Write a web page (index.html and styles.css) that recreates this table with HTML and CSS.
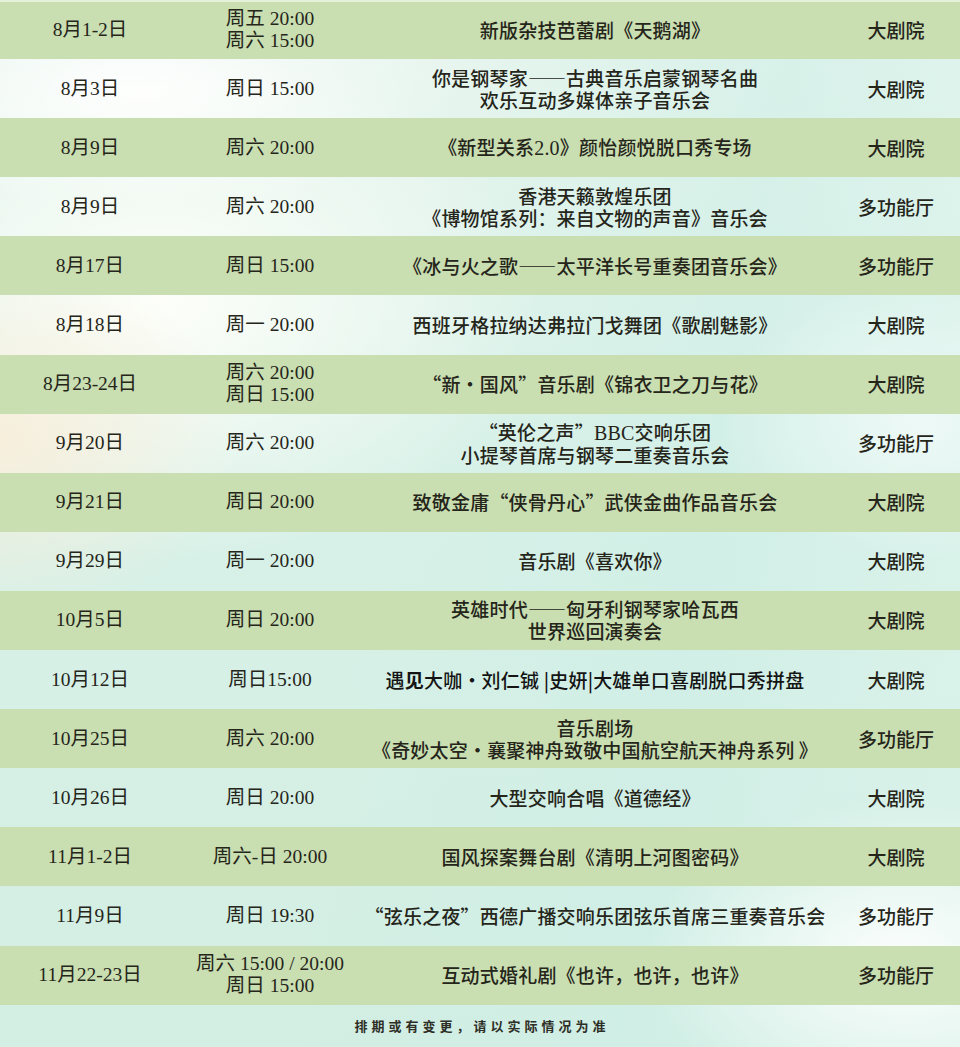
FILE: index.html
```html
<!DOCTYPE html>
<html lang="zh-CN">
<head>
<meta charset="utf-8">
<title>演出排期</title>
<link rel="stylesheet" href="styles.css">
</head>
<body>
<main class="page">
  <div class="schedule">
    <div class="row green">
      <div class="date">8月1-2日</div>
      <div class="time">周五 20:00<br>周六 15:00</div>
      <div class="title">新版杂技芭蕾剧《天鹅湖》</div>
      <div class="venue">大剧院</div>
    </div>
    <div class="row">
      <div class="date">8月3日</div>
      <div class="time">周日 15:00</div>
      <div class="title">你是钢琴家——古典音乐启蒙钢琴名曲<br>欢乐互动多媒体亲子音乐会</div>
      <div class="venue">大剧院</div>
    </div>
    <div class="row green">
      <div class="date">8月9日</div>
      <div class="time">周六 20:00</div>
      <div class="title">《新型关系<span class="lat">2.0</span>》颜怡颜悦脱口秀专场</div>
      <div class="venue">大剧院</div>
    </div>
    <div class="row">
      <div class="date">8月9日</div>
      <div class="time">周六 20:00</div>
      <div class="title">香港天籁敦煌乐团<br>《博物馆系列：来自文物的声音》音乐会</div>
      <div class="venue">多功能厅</div>
    </div>
    <div class="row green">
      <div class="date">8月17日</div>
      <div class="time">周日 15:00</div>
      <div class="title">《冰与火之歌——太平洋长号重奏团音乐会》</div>
      <div class="venue">多功能厅</div>
    </div>
    <div class="row">
      <div class="date">8月18日</div>
      <div class="time">周一 20:00</div>
      <div class="title">西班牙格拉纳达弗拉门戈舞团《歌剧魅影》</div>
      <div class="venue">大剧院</div>
    </div>
    <div class="row green">
      <div class="date">8月23-24日</div>
      <div class="time">周六 20:00<br>周日 15:00</div>
      <div class="title">“新・国风”音乐剧《锦衣卫之刀与花》</div>
      <div class="venue">大剧院</div>
    </div>
    <div class="row">
      <div class="date">9月20日</div>
      <div class="time">周六 20:00</div>
      <div class="title">“英伦之声”<span class="lat">BBC</span>交响乐团<br>小提琴首席与钢琴二重奏音乐会</div>
      <div class="venue">多功能厅</div>
    </div>
    <div class="row green">
      <div class="date">9月21日</div>
      <div class="time">周日 20:00</div>
      <div class="title">致敬金庸“侠骨丹心”武侠金曲作品音乐会</div>
      <div class="venue">大剧院</div>
    </div>
    <div class="row">
      <div class="date">9月29日</div>
      <div class="time">周一 20:00</div>
      <div class="title">音乐剧《喜欢你》</div>
      <div class="venue">大剧院</div>
    </div>
    <div class="row green">
      <div class="date">10月5日</div>
      <div class="time">周日 20:00</div>
      <div class="title">英雄时代——匈牙利钢琴家哈瓦西<br>世界巡回演奏会</div>
      <div class="venue">大剧院</div>
    </div>
    <div class="row">
      <div class="date">10月12日</div>
      <div class="time">周日15:00</div>
      <div class="title sans">遇<b>见</b>大咖・刘仁铖 |史妍|大雄单口喜剧脱口秀拼盘</div>
      <div class="venue">大剧院</div>
    </div>
    <div class="row green">
      <div class="date">10月25日</div>
      <div class="time">周六 20:00</div>
      <div class="title">音乐剧场<br>《奇妙太空・襄聚神舟致敬中国航空航天神舟系列 》</div>
      <div class="venue">多功能厅</div>
    </div>
    <div class="row">
      <div class="date">10月26日</div>
      <div class="time">周日 20:00</div>
      <div class="title">大型交响合唱《道德经》</div>
      <div class="venue">大剧院</div>
    </div>
    <div class="row green">
      <div class="date">11月1-2日</div>
      <div class="time">周六-日 20:00</div>
      <div class="title">国风探案舞台剧《清明上河图密码》</div>
      <div class="venue">大剧院</div>
    </div>
    <div class="row">
      <div class="date">11月9日</div>
      <div class="time">周日 19:30</div>
      <div class="title">“弦乐之夜”西德广播交响乐团弦乐首席三重奏音乐会</div>
      <div class="venue">多功能厅</div>
    </div>
    <div class="row green">
      <div class="date">11月22-23日</div>
      <div class="time">周六 15:00 / 20:00<br>周日 15:00</div>
      <div class="title">互动式婚礼剧《也许，也许，也许》</div>
      <div class="venue">多功能厅</div>
    </div>
  </div>
  <p class="note">排期或有变更，请以实际情况为准</p>
</main>
</body>
</html>
```

FILE: styles.css
```css
html, body {
  margin: 0;
  padding: 0;
}

body {
  width: 960px;
  height: 1047px;
  overflow: hidden;
  color: #25251a;
  font-family: "Noto Sans CJK SC", sans-serif;
  background-color: #d9f1e8;
  background-image:
    radial-gradient(ellipse 240px 180px at 0px 440px, rgba(250, 238, 218, 0.9), rgba(250, 238, 218, 0)),
    radial-gradient(ellipse 380px 260px at 160px 300px, rgba(255, 255, 250, 0.95), rgba(255, 255, 250, 0)),
    radial-gradient(ellipse 320px 120px at 140px 90px, rgba(255, 255, 255, 0.95), rgba(255, 255, 255, 0)),
    radial-gradient(ellipse 260px 160px at 900px 960px, rgba(255, 255, 255, 0.9), rgba(255, 255, 255, 0)),
    radial-gradient(ellipse 200px 140px at 920px 420px, rgba(240, 250, 248, 0.9), rgba(240, 250, 248, 0)),
    linear-gradient(100deg, rgba(220, 243, 236, 0) 40%, rgba(205, 238, 230, 0.6) 70%, rgba(225, 246, 240, 0.4) 100%),
    linear-gradient(180deg, #e9f6ef 0%, #d8f1e8 50%, #d3eee3 100%);
}

.page {
  display: flex;
  flex-direction: column;
}

.schedule {
  display: flex;
  flex-direction: column;
}

.row {
  display: grid;
  grid-template-columns: 180px 180px 470px 130px;
  align-items: center;
  height: 59.1px;
  text-align: center;
  font-size: 19px;
  line-height: 22px;
}

.row.green {
  background: #c9deb1;
}

.row:first-child {
  box-shadow: inset 0 2px 0 rgba(235, 245, 228, 0.8);
}

.date,
.time {
  font-family: "Liberation Serif", "Noto Sans CJK SC", serif;
  font-size: 19.5px;
}

.title {
  font-family: "Noto Sans CJK SC", sans-serif;
  font-weight: 500;
  letter-spacing: 0.2px;
}

.title .lat {
  font-family: "Liberation Serif", serif;
  font-size: 20px;
  font-weight: 400;
}

.title.sans {
  color: #141414;
}

.title.sans b {
  font-weight: 700;
}

.venue {
  font-family: "Noto Sans CJK SC", sans-serif;
  font-weight: 500;
  padding-left: 2px;
}

.note {
  margin: 0;
  height: 42px;
  display: flex;
  align-items: center;
  justify-content: center;
  font-family: "Noto Sans CJK SC", sans-serif;
  font-size: 13px;
  font-weight: 700;
  letter-spacing: 4px;
  padding-left: 4px;
  color: #2e2e26;
}
```
